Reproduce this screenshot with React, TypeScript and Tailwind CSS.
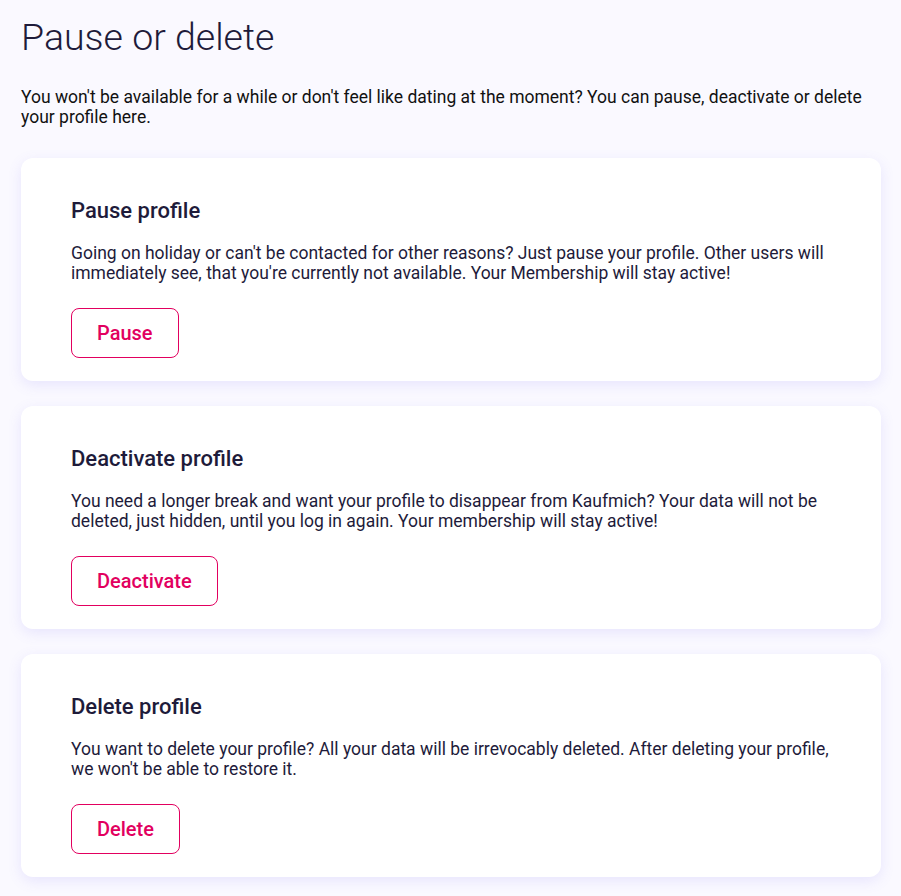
const cards = [
  {
    title: 'Pause profile',
    text: "Going on holiday or can't be contacted for other reasons? Just pause your profile. Other users will immediately see, that you're currently not available. Your Membership will stay active!",
    button: 'Pause',
  },
  {
    title: 'Deactivate profile',
    text: 'You need a longer break and want your profile to disappear from Kaufmich? Your data will not be deleted, just hidden, until you log in again. Your membership will stay active!',
    button: 'Deactivate',
  },
  {
    title: 'Delete profile',
    text: "You want to delete your profile? All your data will be irrevocably deleted. After deleting your profile, we won't be able to restore it.",
    button: 'Delete',
  },
];

export default function App() {
  return (
    <div className="min-h-[896px] bg-[#faf9ff] px-[21px] pt-[14px] pb-5 font-['Roboto',sans-serif]">
      <h1 className="text-[37.5px] font-light leading-[46px] text-[#1e1b3a]">Pause or delete</h1>
      <p className="mt-[27px] text-[17.5px] leading-[20px] text-[#111]">
        You won't be available for a while or don't feel like dating at the moment? You can pause, deactivate or delete your profile here.
      </p>
      <div className="mt-[31px] flex w-[860px] flex-col gap-[25px]">
        {cards.map((card) => (
          <section key={card.title} className="rounded-xl bg-white px-[50px] pt-[40px] pb-[23px] shadow-[0_4px_14px_rgba(110,90,240,0.13)]">
            <h2 className="text-[22px] font-medium leading-[26px] text-[#1e1b3a]">{card.title}</h2>
            <p className="mt-[19px] text-[17.5px] leading-[20px] text-[#1e1b3a]">{card.text}</p>
            <button className="mt-[25px] h-[50px] rounded-lg border border-[#e2005f] px-[25px] text-[20px] font-medium text-[#e2005f]">
              {card.button}
            </button>
          </section>
        ))}
      </div>
    </div>
  );
}
